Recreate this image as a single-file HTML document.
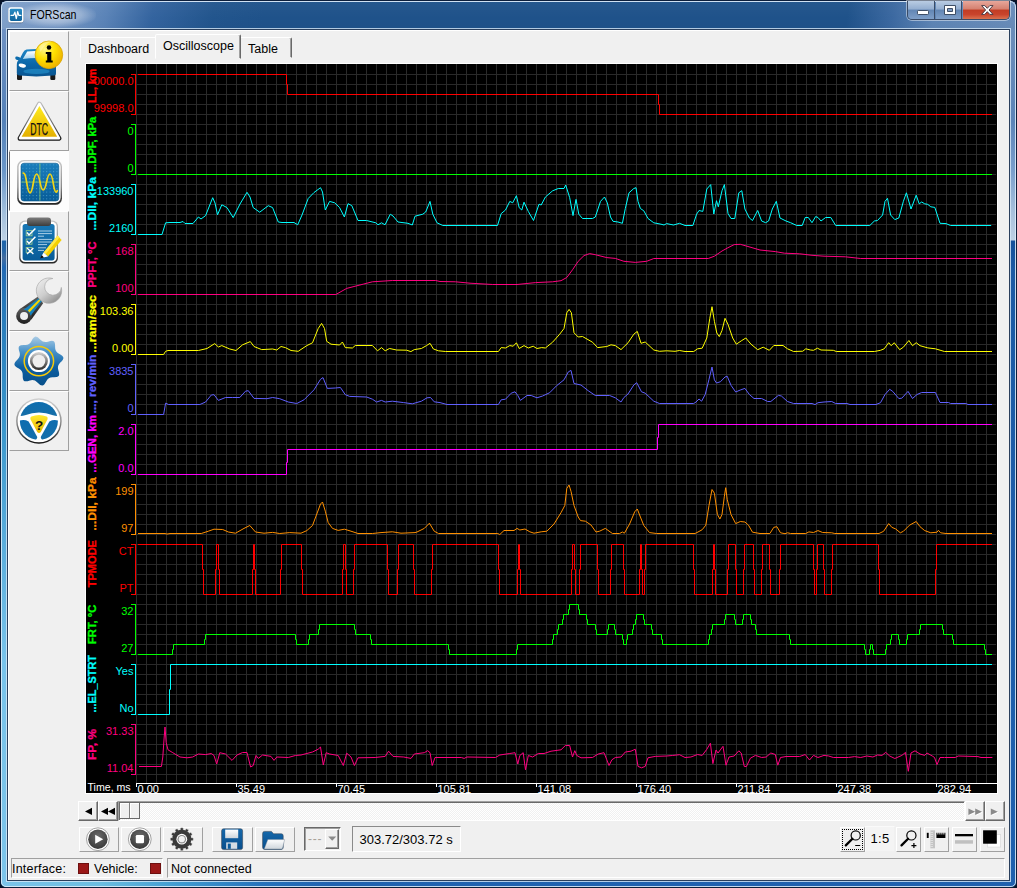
<!DOCTYPE html>
<html lang="en"><head><meta charset="utf-8"><title>FORScan</title>
<style>
html,body{margin:0;padding:0}
body{width:1017px;height:888px;overflow:hidden;background:#071226;font-family:"Liberation Sans","DejaVu Sans",sans-serif;font-size:12.5px;color:#000;position:relative}
div,span{box-sizing:border-box}
.abs{position:absolute}
#win{position:absolute;left:0;top:0;width:1017px;height:888px;border-radius:7px 7px 6px 6px;background:#0d1f3c;overflow:hidden}
#glass{position:absolute;left:1px;top:1px;width:1015px;height:886px;border-radius:6px 6px 5px 5px;
 background:linear-gradient(180deg,#7094c5 0px,#6e91c3 30px,#5582b9 120px,#6996c8 170px,#a0bedc 210px,#bed2e6 239px,#1e64aa 240px,#2a68a8 250px,#466ea0 257px,#2369b4 266px,#2878b9 300px,#3a96cc 420px,#78c3eb 660px,#7cc4ea 886px);}
#glassR{position:absolute;left:1008px;top:1px;width:8px;height:886px;border-radius:0 6px 5px 0;
 background:linear-gradient(180deg,#6a8dba 0px,#698cb9 40px,#5c84b8 120px,#7a9fcc 170px,#a6c0dc 210px,#bed0e4 239px,#14509a 240px,#1c5aa4 270px,#1f60ae 886px);}
#glassB{position:absolute;left:1px;top:880px;width:1015px;height:7px;border-radius:0 0 5px 5px;background:linear-gradient(90deg,#7cc4ea 0px,#6bbde0 100px,#3f9ad0 180px,#2672bb 260px,#1f62b0 330px,#1f60ae 1015px);}
#hl{position:absolute;left:1px;top:1px;width:1015px;height:886px;border-radius:6px 6px 5px 5px;border:1px solid rgba(225,238,250,.85);}
#title{position:absolute;left:2px;top:2px;width:1013px;height:27px;
 background:linear-gradient(100deg,#80a1cb 0px,#7597c5 60px,#5a83b7 105px,#34649f 150px,#22558d 210px,#1f528a 260px,#1f528a 835px,#3c69a1 880px,#5e85b5 920px,#6a8dba 1013px);}
#title:after{content:"";position:absolute;left:0;top:0;right:0;bottom:0;background:linear-gradient(180deg,rgba(255,255,255,.03),rgba(255,255,255,0) 60%,rgba(0,0,0,.02));}
#glow{position:absolute;left:16px;top:3px;width:80px;height:24px;border-radius:12px;background:radial-gradient(ellipse at center,rgba(255,255,255,.55) 0%,rgba(255,255,255,.30) 45%,rgba(255,255,255,0) 75%);}
#ttext{position:absolute;left:29.5px;top:8px;font-size:12.4px;line-height:14px;color:#000;transform:scaleX(.855);transform-origin:0 0}
#clientedge{position:absolute;left:6px;top:28px;width:1005px;height:854px;border:1px solid rgba(215,232,248,.8);}
#clientedge2{position:absolute;left:7px;top:29px;width:1003px;height:852px;border:1px solid #2a3f5c;}
#client{position:absolute;left:8px;top:30px;width:1001px;height:850px;background:#f0f0f0;border-left:1px solid #fff;border-top:1px solid #fff}
/* caption buttons */
#cap{position:absolute;left:907px;top:1px;width:103px;height:19px;border:1px solid #3a4b66;border-top:none;border-radius:0 0 5px 5px;overflow:hidden;box-shadow:0 0 0 1px rgba(255,255,255,.45)}
#cap div{position:absolute;top:0;height:18px}
.cbtn{background:linear-gradient(180deg,#b9cce3 0%,#94aed0 45%,#6286b4 50%,#7f9fc8 100%);}
#cmin{left:0;width:27px;border-right:1px solid #3a4b66}
#cmax{left:28px;width:26px;border-right:1px solid #3a4b66}
#cclose{left:55px;width:47px;background:linear-gradient(180deg,#e7a79b 0%,#d4806f 45%,#c13c24 50%,#c9442c 75%,#d9714f 100%);}
/* sidebar */
.sb{position:absolute;left:9px;width:60px;height:60px;border:1px solid;border-color:#fff #a0a0a0 #a0a0a0 #fff;background:#f0f0f0}
.sb.sel{border-color:#fdfdfd #fdfdfd #fdfdfd #696969;background:#fdfdfd}
/* tabs */
.tab{position:absolute;top:37px;height:21px;border:1px solid;border-color:#fff #696969 transparent #fff;border-radius:2px 2px 0 0;font-size:12.5px;line-height:14px;padding:0;white-space:nowrap;box-shadow:inset -1px 0 0 #a0a0a0}
.tab span{position:absolute;top:4px}
.tab.sel{top:34px;height:25px;background:#f0f0f0}
/* plot */
#plotframe{position:absolute;left:85px;top:63px;width:913px;height:731px;background:#fff}
svg.plot{position:absolute;left:1px;top:1px;display:block}
svg.plot text{font-family:"Liberation Sans","DejaVu Sans",sans-serif}
.tv{font-size:11px}
.tm{font-size:10.6px}
.tl{font-size:11.5px;font-weight:bold}
/* scrollbar */
#sbar{position:absolute;left:118px;top:801px;width:847px;height:20px;background:repeating-conic-gradient(#fff 0% 25%,#f0f0f0 0% 50%) 0 0/2px 2px;border:1px solid;border-color:#a0a0a0 #fff #fff #a0a0a0;box-shadow:inset 1px 1px 0 #696969}
.sbb{position:absolute;top:801px;width:20px;height:20px;background:#f0f0f0;border:1px solid;border-color:#fff #696969 #696969 #fff;box-shadow:inset -1px -1px 0 #a0a0a0}
/* toolbar */
.tb{position:absolute;top:827px;height:25px;background:#f0f0f0;border:1px solid;border-color:#fff #a0a0a0 #a0a0a0 #fff}
.tb svg{position:absolute;left:0;top:0}
/* status */
.st{position:absolute;top:858px;height:20px;border:1px solid;border-color:#a0a0a0 #fff #fff #a0a0a0;font-size:12.5px;line-height:14px}
.st span{position:absolute;top:3px;white-space:nowrap}
.led{position:absolute;top:4px;width:11px;height:11px;background:#9b1818;border:1px solid #6d1010}
</style></head>
<body>
<div id="win">
 <div id="glass"></div><div id="glassR"></div><div id="glassB"></div>
 <div id="title"></div><div id="glow"></div>
 <div id="hl"></div>
 <svg class="abs" style="left:7px;top:6px" width="18" height="18" viewBox="0 0 18 18">
 <defs><linearGradient id="aig" x1="0" y1="0" x2="0" y2="1"><stop offset="0" stop-color="#2a8cc4"/><stop offset="1" stop-color="#0f639c"/></linearGradient></defs>
 <rect x="1.5" y="2" width="15" height="15.2" rx="2.6" fill="#1b2b3f" opacity=".55"/>
 <rect x="1.3" y="1.3" width="15.2" height="15.2" rx="2.6" fill="#fff"/>
 <rect x="2.8" y="2.8" width="12.2" height="12.2" rx="1.4" fill="url(#aig)"/>
 <path d="M4 9.3H6.6L7.9 6.2L9.3 12.6L10.7 5.6L11.8 9.3H14" stroke="#fff" stroke-width="1.25" fill="none" stroke-linejoin="round" stroke-linecap="round"/>
</svg>

 <div id="ttext">FORScan</div>
 <div id="cap"><div id="cmin" class="cbtn"></div><div id="cmax" class="cbtn"></div><div id="cclose"></div><svg class="abs" style="left:0;top:0" width="103" height="20" viewBox="907 1 103 20">
 <rect x="916.5" y="10.5" width="11" height="4" rx=".8" fill="#fff" stroke="#3f4f66" stroke-width="1"/>
 <path d="M943.5 5.5h11v9h-11z" fill="#fff" stroke="#3f4f66" stroke-width="1"/>
 <path d="M946.5 8.5h5v3h-5z" fill="#7f9cc4" stroke="#3f4f66" stroke-width="1"/>
 <path d="M980.6 5.6h3.2l2.5 2.7 2.5-2.7h3.2l-4 4.4 4 4.4h-3.2l-2.5-2.7-2.5 2.7h-3.2l4-4.4z" fill="#fff" stroke="#4a3a44" stroke-width="1" stroke-linejoin="round"/>
</svg>
</div>
 <div id="clientedge"></div><div id="clientedge2"></div>
 <div id="client"></div>

 <!-- sidebar -->
 <div class="sb" style="top:31px"></div><svg class="abs" style="left:8px;top:30px" width="62" height="60" viewBox="8 30 62 60">
 <defs>
  <linearGradient id="carb" x1="0" y1="0" x2="0" y2="1"><stop offset="0" stop-color="#1f86c6"/><stop offset=".55" stop-color="#0b66a8"/><stop offset="1" stop-color="#0a5590"/></linearGradient>
  <radialGradient id="cary" cx=".35" cy=".3" r=".8"><stop offset="0" stop-color="#fff68a"/><stop offset=".45" stop-color="#ffe100"/><stop offset="1" stop-color="#e9a800"/></radialGradient>
  <linearGradient id="carw" x1="0" y1="0" x2="0" y2="1"><stop offset="0" stop-color="#ffffff"/><stop offset="1" stop-color="#a8d4ee"/></linearGradient>
 </defs>
 <rect x="17" y="73" width="5" height="7" rx="1.2" fill="#1a1a1a"/>
 <rect x="50.3" y="73" width="5" height="7" rx="1.2" fill="#1a1a1a"/>
 <path d="M26.5 49.6Q33 48.6 46 49.4Q49 50 50.5 53L53 59Q56 61 56 65V73.2Q56 75.4 53 75.6Q36.4 77.2 19.5 75.6Q16.8 75.4 16.8 73.2V65Q16.8 61 19.5 59.3L23 52.5Q24.3 50 26.5 49.6Z" fill="url(#carb)"/>
 <path d="M15.3 57.4Q15.5 56.4 17 56.6L19.6 57.3Q20.6 58 20 59.4L18.8 60.2Q15 60 15.3 57.4Z" fill="#0d6cad"/>
 <path d="M27.2 51.6Q34 50.7 45 51.5L48.5 58.6Q34 57 22.8 59Z" fill="url(#carw)"/>
 <ellipse cx="22.3" cy="65.6" rx="3.7" ry="1.9" fill="#fff" transform="rotate(12 22.3 65.6)"/>
 <ellipse cx="50.5" cy="65.6" rx="3.7" ry="1.9" fill="#fff" transform="rotate(-12 50.5 65.6)"/>
 <ellipse cx="36.5" cy="71.4" rx="13" ry="2.6" fill="#2a9ad6" opacity=".55"/>
 <circle cx="48.9" cy="54.85" r="13.8" fill="url(#cary)" stroke="#d9a400" stroke-width=".8"/>
 <path d="M39 47Q44 40 52 41.5Q44 44 40.5 52Z" fill="#fff" opacity=".35"/>
 <circle cx="49" cy="47.6" r="2.25" fill="#000"/>
 <path d="M45.8 52.1H51.3V60.5H52.7V62.4H45.8V60.5H47.2V54H45.8Z" fill="#000"/>
</svg>

 <div class="sb" style="top:91px"></div><svg class="abs" style="left:8px;top:90px" width="62" height="60" viewBox="8 90 62 60">
 <defs>
  <linearGradient id="dtcy" x1="0" y1="0" x2="0" y2="1"><stop offset="0" stop-color="#ffec20"/><stop offset="1" stop-color="#e4b000"/></linearGradient>
  <linearGradient id="dtco" gradientUnits="userSpaceOnUse" x1="0" y1="101" x2="0" y2="141"><stop offset="0" stop-color="#c4c4c4"/><stop offset=".6" stop-color="#6a6a6a"/><stop offset="1" stop-color="#111"/></linearGradient>
 </defs>
 <path d="M39.4 104.2L58.8 138.2H20.2Z" fill="url(#dtco)" stroke="url(#dtco)" stroke-width="5.2" stroke-linejoin="round"/>
 <path d="M39.4 104.2L58.8 138.2H20.2Z" fill="#fff" stroke="#fff" stroke-width="2.8" stroke-linejoin="round"/>
 <path d="M39.4 105.9L57.2 136.8H21.6Z" fill="url(#dtcy)"/>
 <text x="39.2" y="135" font-family="'Liberation Sans',sans-serif" font-size="16.5" text-anchor="middle" textLength="18" lengthAdjust="spacingAndGlyphs" fill="#111" stroke="#111" stroke-width=".25">DTC</text>
</svg>

 <div class="sb sel" style="top:151px"></div><svg class="abs" style="left:8px;top:150px" width="62" height="60" viewBox="8 150 62 60">
 <defs>
  <linearGradient id="osco" x1="0" y1="0" x2="0" y2="1"><stop offset="0" stop-color="#c9c9c9"/><stop offset=".6" stop-color="#8a8a8a"/><stop offset="1" stop-color="#1e1e1e"/></linearGradient>
  <linearGradient id="oscb" x1="0" y1="0" x2="0" y2="1"><stop offset="0" stop-color="#1a7dbb"/><stop offset="1" stop-color="#075c98"/></linearGradient>
  <pattern id="oscd" x="22.4" y="164.4" width="3.4" height="3.4" patternUnits="userSpaceOnUse"><rect x="0" y="0" width="1" height="1" fill="#5fb0d8" opacity=".7"/></pattern>
 </defs>
 <rect x="17.2" y="160" width="44.8" height="44.8" rx="6.5" fill="url(#osco)"/>
 <rect x="18.6" y="161.3" width="42" height="41.6" rx="5.4" fill="#fff"/>
 <rect x="21" y="163.2" width="37.8" height="37.8" rx="3" fill="url(#oscb)" stroke="#0c5a8e" stroke-width=".6"/>
 <rect x="22" y="164" width="36" height="36" fill="url(#oscd)"/>
 <path d="M39.9 163.5V200.7M21.3 182.1H58.5" stroke="#8fcf6a" stroke-width="1" opacity=".75"/>
 <path d="M23.2 173.2C27 172.5 26.5 192.8 30 192.8S33 174 36.6 174S39.8 190 43.2 190S46.5 174 50 174S53 192.2 56.3 192.2Q57 192 57.3 190.5" stroke="#f2d416" stroke-width="1.7" fill="none" stroke-linecap="round"/>
</svg>

 <div class="sb" style="top:211px"></div><svg class="abs" style="left:8px;top:210px" width="62" height="60" viewBox="8 210 62 60">
 <defs>
  <linearGradient id="clo" x1="0" y1="0" x2="0" y2="1"><stop offset="0" stop-color="#c4c4c4"/><stop offset=".6" stop-color="#8a8a8a"/><stop offset="1" stop-color="#222"/></linearGradient>
  <linearGradient id="clb" x1="0" y1="0" x2="0" y2="1"><stop offset="0" stop-color="#1878b6"/><stop offset="1" stop-color="#085c98"/></linearGradient>
  <linearGradient id="clc" x1="0" y1="0" x2="0" y2="1"><stop offset="0" stop-color="#7c7c7c"/><stop offset="1" stop-color="#3c3c3c"/></linearGradient>
 </defs>
 <rect x="19.2" y="220.6" width="38.8" height="43" rx="5.5" fill="url(#clo)"/>
 <rect x="20.5" y="221.8" width="36.2" height="40.2" rx="4.6" fill="#fff"/>
 <rect x="22.6" y="224" width="32" height="36.4" rx="2.6" fill="url(#clb)"/>
 <rect x="27" y="217.6" width="24" height="8.4" rx="3" fill="url(#clc)"/>
 <g fill="none" stroke="#9fd08a" stroke-width=".8"><rect x="26.2" y="230.6" width="5.8" height="5.2"/><rect x="26.2" y="239" width="5.8" height="5.2"/><rect x="26.2" y="247.4" width="5.8" height="5.2"/></g>
 <path d="M27 232.6L29 235L35.4 228.4M27 241L29 243.4L35.4 236.8" stroke="#fff" stroke-width="1.5" fill="none"/>
 <path d="M27 248L33.4 254M33.4 248L27 254" stroke="#fff" stroke-width="1.3" fill="none"/>
 <path d="M38 231H52M38 233.6H52M38 236.2H44M38 239.4H52M38 242H52M38 244.6H47M38 247.8H46M38 250.4H44" stroke="#cfe6f4" stroke-width=".8"/>
 <path d="M57.6 235.6L61.6 240L48 256.4L43.6 252.4Z" fill="#f4d000"/>
 <path d="M57.6 235.6L59.4 237.6L45.6 254L43.6 252.4Z" fill="#ffe94a"/>
 <path d="M43.6 252.4L48 256.4L40.6 258Z" fill="#fff"/>
 <path d="M41.7 255.6L43 257.5L40.3 258.2Z" fill="#000"/>
 <path d="M40.3 258.2L41.9 255.2L44 257.4Z" fill="#111"/>
</svg>

 <div class="sb" style="top:271px"></div><svg class="abs" style="left:8px;top:270px" width="62" height="60" viewBox="8 270 62 60">
 <defs>
  <linearGradient id="wrs" x1="0" y1="0" x2=".8" y2="1"><stop offset="0" stop-color="#f2f2f2"/><stop offset=".55" stop-color="#cdcdcd"/><stop offset="1" stop-color="#8a8a8a"/></linearGradient>
  <linearGradient id="wrd" x1="0" y1="0" x2="0" y2="1"><stop offset="0" stop-color="#5e5e5e"/><stop offset="1" stop-color="#1e1e1e"/></linearGradient>
 </defs>
 <path d="M19.2 309.6L37.6 296.8L43.2 303.2L31.4 319.6Z" fill="url(#wrd)"/>
 <circle cx="24.05" cy="316" r="7.9" fill="url(#wrd)"/>
 <path d="M23.6 309.8L38.6 298.2L42 300.9L30.6 315.8Q29 310.4 23.6 309.8Z" fill="#1580bc"/>
 <path d="M27.8 310.4L39.2 299.2L40.6 300.5L29.6 312.2Z" fill="#f6d400"/>
 <circle cx="24.05" cy="315.9" r="4" fill="#f0f0f0"/>
 <path d="M52.8 278.5A12.7 12.7 0 1 0 61.3 287.4A8.35 8.35 0 1 1 52.8 278.5Z" fill="url(#wrs)" stroke="#a2a2a2" stroke-width=".6"/>
</svg>

 <div class="sb" style="top:331px"></div><svg class="abs" style="left:8px;top:330px" width="62" height="60" viewBox="8 330 62 60">
 <defs>
  <linearGradient id="grb" x1="0" y1="0" x2="0" y2="1"><stop offset="0" stop-color="#a9cbe5"/><stop offset=".3" stop-color="#4a93ca"/><stop offset=".62" stop-color="#0d5fa2"/><stop offset="1" stop-color="#07508a"/></linearGradient>
  <linearGradient id="grg" x1="0" y1="0" x2="0" y2="1"><stop offset="0" stop-color="#d6d6d6"/><stop offset=".5" stop-color="#7a7a7a"/><stop offset="1" stop-color="#2a2a2a"/></linearGradient>
 </defs>
 <path d="M24.9 344.9Q29.5 345.1 31.5 341.0Q33.6 336.9 35.5 336.6Q37.3 336.4 40.4 339.7Q43.6 343.1 47.9 341.7Q52.3 340.2 53.8 341.3Q55.3 342.5 55.1 347.1Q54.9 351.7 59.0 353.7Q63.1 355.8 63.4 357.7Q63.6 359.5 60.3 362.6Q56.9 365.8 58.3 370.1Q59.8 374.5 58.7 376.0Q57.5 377.5 52.9 377.3Q48.3 377.1 46.3 381.2Q44.2 385.3 42.3 385.6Q40.5 385.8 37.4 382.5Q34.2 379.1 29.9 380.5Q25.5 382.0 24.0 380.9Q22.5 379.7 22.7 375.1Q22.9 370.5 18.8 368.5Q14.7 366.4 14.4 364.5Q14.2 362.7 17.5 359.6Q20.9 356.4 19.5 352.1Q18.0 347.7 19.1 346.2Q20.3 344.7 24.9 344.9Z" fill="url(#grb)"/>
 <circle cx="38.9" cy="361.1" r="14.7" fill="none" stroke="#f5c90a" stroke-width="1.5"/>
 <circle cx="38.9" cy="361.1" r="11" fill="#fff"/>
 <circle cx="38.9" cy="361.1" r="9" fill="url(#grg)"/>
 <circle cx="38.9" cy="361.1" r="6.4" fill="#eeeeee"/>
</svg>

 <div class="sb" style="top:391px"></div><svg class="abs" style="left:8px;top:390px" width="62" height="60" viewBox="8 390 62 60">
 <defs>
  <linearGradient id="hlo" x1="0" y1="0" x2="0" y2="1"><stop offset="0" stop-color="#d2d2d2"/><stop offset=".55" stop-color="#8c8c8c"/><stop offset="1" stop-color="#111"/></linearGradient>
  <linearGradient id="hlb" x1="0" y1="0" x2="0" y2="1"><stop offset="0" stop-color="#0d6db0"/><stop offset="1" stop-color="#176fa8"/></linearGradient>
  <linearGradient id="hly" x1="0" y1="0" x2="0" y2="1"><stop offset="0" stop-color="#ffe92e"/><stop offset="1" stop-color="#eab800"/></linearGradient>
  <clipPath id="hlc"><circle cx="38.9" cy="421" r="19"/></clipPath>
 </defs>
 <circle cx="38.9" cy="421" r="22.8" fill="url(#hlo)"/>
 <circle cx="38.9" cy="421" r="21.3" fill="#fff"/>
 <g clip-path="url(#hlc)" fill="url(#hlb)">
  <path d="M18 400H60V415.6Q56.5 416.6 53 415.2Q39 410 25 415.2Q21.5 416.6 18 415.6Z"/>
  <path d="M18 421Q24 419 28.6 421.4L37 436.6Q37.6 438.6 35.4 440.2L30 444H18Z"/>
  <path d="M60 421Q54 419 49.4 421.4L41 436.6Q40.4 438.6 42.6 440.2L48 444H60Z"/>
 </g>
 <path d="M31.4 416.4Q39 413.4 46.6 416.4Q48.4 417.4 47.4 419.6L40.8 432Q39 434 37.2 432L30.6 419.6Q29.6 417.4 31.4 416.4Z" fill="url(#hly)"/>
 <text x="39" y="430.2" font-family="'Liberation Sans',sans-serif" font-size="13.5" font-weight="bold" text-anchor="middle" fill="#111">?</text>
</svg>


 <!-- tabs -->
 <div class="tab" style="left:80px;width:78px"><span style="left:7px">Dashboard</span></div>
 <div class="tab" style="left:238px;width:54px"><span style="left:9px">Table</span></div>
 <div class="tab sel" style="left:155px;width:86px"><span style="left:7px">Oscilloscope</span></div>

 <!-- plot -->
 <div id="plotframe">
<svg class="plot" width="911" height="729" viewBox="86 64 911 729">
<rect x="86" y="64" width="911" height="729" fill="#000"/>
<path d="M136.5 64V783M146.5 64V783M156.5 64V783M166.5 64V783M176.5 64V783M186.5 64V783M196.5 64V783M206.5 64V783M216.5 64V783M226.5 64V783M236.5 64V783M246.5 64V783M256.5 64V783M266.5 64V783M276.5 64V783M286.5 64V783M296.5 64V783M306.5 64V783M316.5 64V783M326.5 64V783M336.5 64V783M346.5 64V783M356.5 64V783M366.5 64V783M376.5 64V783M386.5 64V783M396.5 64V783M406.5 64V783M416.5 64V783M426.5 64V783M436.5 64V783M446.5 64V783M456.5 64V783M466.5 64V783M476.5 64V783M486.5 64V783M496.5 64V783M506.5 64V783M516.5 64V783M526.5 64V783M536.5 64V783M546.5 64V783M556.5 64V783M566.5 64V783M576.5 64V783M586.5 64V783M596.5 64V783M606.5 64V783M616.5 64V783M626.5 64V783M636.5 64V783M646.5 64V783M656.5 64V783M666.5 64V783M676.5 64V783M686.5 64V783M696.5 64V783M706.5 64V783M716.5 64V783M726.5 64V783M736.5 64V783M746.5 64V783M756.5 64V783M766.5 64V783M776.5 64V783M786.5 64V783M796.5 64V783M806.5 64V783M816.5 64V783M826.5 64V783M836.5 64V783M846.5 64V783M856.5 64V783M866.5 64V783M876.5 64V783M886.5 64V783M896.5 64V783M906.5 64V783M916.5 64V783M926.5 64V783M936.5 64V783M946.5 64V783M956.5 64V783M966.5 64V783M976.5 64V783M986.5 64V783M136 74.5H996M136 84.5H996M136 94.5H996M136 104.5H996M136 114.5H996M136 124.5H996M136 134.5H996M136 144.5H996M136 154.5H996M136 164.5H996M136 174.5H996M136 184.5H996M136 194.5H996M136 204.5H996M136 214.5H996M136 224.5H996M136 234.5H996M136 244.5H996M136 254.5H996M136 264.5H996M136 274.5H996M136 284.5H996M136 294.5H996M136 304.5H996M136 314.5H996M136 324.5H996M136 334.5H996M136 344.5H996M136 354.5H996M136 364.5H996M136 374.5H996M136 384.5H996M136 394.5H996M136 404.5H996M136 414.5H996M136 424.5H996M136 434.5H996M136 444.5H996M136 454.5H996M136 464.5H996M136 474.5H996M136 484.5H996M136 494.5H996M136 504.5H996M136 514.5H996M136 524.5H996M136 534.5H996M136 544.5H996M136 554.5H996M136 564.5H996M136 574.5H996M136 584.5H996M136 594.5H996M136 604.5H996M136 614.5H996M136 624.5H996M136 634.5H996M136 644.5H996M136 654.5H996M136 664.5H996M136 674.5H996M136 684.5H996M136 694.5H996M136 704.5H996M136 714.5H996M136 724.5H996M136 734.5H996M136 744.5H996M136 754.5H996M136 764.5H996M136 774.5H996" stroke="#2a2a2a" stroke-width="1" fill="none" shape-rendering="crispEdges"/>
<path d="M136 783.5H997" stroke="#fff" stroke-width="1" shape-rendering="crispEdges"/>
<text x="137.5" y="792.6" class="tv" fill="#fff">0.00</text>
<text x="237.5" y="792.6" class="tv" fill="#fff">35.49</text>
<text x="337.5" y="792.6" class="tv" fill="#fff">70.45</text>
<text x="437.5" y="792.6" class="tv" fill="#fff">105.81</text>
<text x="537.5" y="792.6" class="tv" fill="#fff">141.08</text>
<text x="637.5" y="792.6" class="tv" fill="#fff">176.40</text>
<text x="737.5" y="792.6" class="tv" fill="#fff">211.84</text>
<text x="837.5" y="792.6" class="tv" fill="#fff">247.38</text>
<text x="937.5" y="792.6" class="tv" fill="#fff">282.94</text>
<path d="M136.5 783V787M236.5 783V787M336.5 783V787M436.5 783V787M536.5 783V787M636.5 783V787M736.5 783V787M836.5 783V787M936.5 783V787" stroke="#fff" stroke-width="1" shape-rendering="crispEdges"/>
<text x="87.5" y="790.8" class="tm" fill="#fff">Time, ms</text>
<text x="133.5" y="85.4" class="tv" text-anchor="end" fill="#ff0000">00000.0</text>
<text x="133.5" y="112.4" class="tv" text-anchor="end" fill="#ff0000">99998.0</text>
<text x="133.5" y="135.4" class="tv" text-anchor="end" fill="#00ff00">0</text>
<text x="133.5" y="172.4" class="tv" text-anchor="end" fill="#00ff00">0</text>
<text x="133.5" y="195.4" class="tv" text-anchor="end" fill="#00ffff">133960</text>
<text x="133.5" y="232.4" class="tv" text-anchor="end" fill="#00ffff">2160</text>
<text x="133.5" y="255.4" class="tv" text-anchor="end" fill="#ff0080">168</text>
<text x="133.5" y="292.4" class="tv" text-anchor="end" fill="#ff0080">100</text>
<text x="133.5" y="315.4" class="tv" text-anchor="end" fill="#ffff00">103.36</text>
<text x="133.5" y="352.4" class="tv" text-anchor="end" fill="#ffff00">0.00</text>
<text x="133.5" y="375.4" class="tv" text-anchor="end" fill="#6060ff">3835</text>
<text x="133.5" y="412.4" class="tv" text-anchor="end" fill="#6060ff">0</text>
<text x="133.5" y="435.4" class="tv" text-anchor="end" fill="#ff00ff">2.0</text>
<text x="133.5" y="472.4" class="tv" text-anchor="end" fill="#ff00ff">0.0</text>
<text x="133.5" y="495.4" class="tv" text-anchor="end" fill="#ff9000">199</text>
<text x="133.5" y="532.4" class="tv" text-anchor="end" fill="#ff9000">97</text>
<text x="133.5" y="555.4" class="tv" text-anchor="end" fill="#ff0000">CT</text>
<text x="133.5" y="592.4" class="tv" text-anchor="end" fill="#ff0000">PT</text>
<text x="133.5" y="615.4" class="tv" text-anchor="end" fill="#00ff00">32</text>
<text x="133.5" y="652.4" class="tv" text-anchor="end" fill="#00ff00">27</text>
<text x="133.5" y="675.4" class="tv" text-anchor="end" fill="#00ffff">Yes</text>
<text x="133.5" y="712.4" class="tv" text-anchor="end" fill="#00ffff">No</text>
<text x="133.5" y="735.4" class="tv" text-anchor="end" fill="#ff0080">31.33</text>
<text x="133.5" y="772.4" class="tv" text-anchor="end" fill="#ff0080">11.04</text>
<text transform="translate(95.9 103) rotate(-90)" class="tl" textLength="34.3" lengthAdjust="spacingAndGlyphs" fill="#ff0000" stroke="#ff0000" stroke-width=".3">LL, km</text>
<text transform="translate(95.9 172.8) rotate(-90)" class="tl" textLength="56.1" lengthAdjust="spacingAndGlyphs" fill="#00ff00" stroke="#00ff00" stroke-width=".3">...DPF, kPa</text>
<text transform="translate(95.9 230.6) rotate(-90)" class="tl" textLength="53.6" lengthAdjust="spacingAndGlyphs" fill="#00ffff" stroke="#00ffff" stroke-width=".3">...DII, kPa</text>
<text transform="translate(95.9 287.4) rotate(-90)" class="tl" textLength="45.9" lengthAdjust="spacingAndGlyphs" fill="#ff0080" stroke="#ff0080" stroke-width=".3">PPFT, °C</text>
<text transform="translate(95.9 352.7) rotate(-90)" class="tl" textLength="57.7" lengthAdjust="spacingAndGlyphs" fill="#ffff00" stroke="#ffff00" stroke-width=".3">...ram/sec</text>
<text transform="translate(95.9 413.5) rotate(-90)" class="tl" textLength="58.8" lengthAdjust="spacingAndGlyphs" fill="#6060ff" stroke="#6060ff" stroke-width=".3">..., rev/min</text>
<text transform="translate(95.9 472.7) rotate(-90)" class="tl" textLength="57.7" lengthAdjust="spacingAndGlyphs" fill="#ff00ff" stroke="#ff00ff" stroke-width=".3">...GEN, km</text>
<text transform="translate(95.9 530.8) rotate(-90)" class="tl" textLength="53.4" lengthAdjust="spacingAndGlyphs" fill="#ff9000" stroke="#ff9000" stroke-width=".3">...DII, kPa</text>
<text transform="translate(95.9 587.3) rotate(-90)" class="tl" textLength="47.3" lengthAdjust="spacingAndGlyphs" fill="#ff0000" stroke="#ff0000" stroke-width=".3">TPMODE</text>
<text transform="translate(95.9 644) rotate(-90)" class="tl" textLength="39.2" lengthAdjust="spacingAndGlyphs" fill="#00ff00" stroke="#00ff00" stroke-width=".3">FRT, °C</text>
<text transform="translate(95.9 712.5) rotate(-90)" class="tl" textLength="57.5" lengthAdjust="spacingAndGlyphs" fill="#00ffff" stroke="#00ffff" stroke-width=".3">...EL_STRT</text>
<text transform="translate(95.9 760) rotate(-90)" class="tl" textLength="31.1" lengthAdjust="spacingAndGlyphs" fill="#ff0080" stroke="#ff0080" stroke-width=".3">FP, %</text>
<path d="M131 74.5H136M135.5 74V115M131 114.5H136" stroke="#ff0000" stroke-width="1" fill="none" shape-rendering="crispEdges"/>
<path d="M131 124.5H136M135.5 124V175M131 174.5H136" stroke="#00ff00" stroke-width="1" fill="none" shape-rendering="crispEdges"/>
<path d="M131 184.5H136M135.5 184V235M131 234.5H136" stroke="#00ffff" stroke-width="1" fill="none" shape-rendering="crispEdges"/>
<path d="M131 244.5H136M135.5 244V295M131 294.5H136" stroke="#ff0080" stroke-width="1" fill="none" shape-rendering="crispEdges"/>
<path d="M131 304.5H136M135.5 304V355M131 354.5H136" stroke="#ffff00" stroke-width="1" fill="none" shape-rendering="crispEdges"/>
<path d="M131 364.5H136M135.5 364V415M131 414.5H136" stroke="#6060ff" stroke-width="1" fill="none" shape-rendering="crispEdges"/>
<path d="M131 424.5H136M135.5 424V475M131 474.5H136" stroke="#ff00ff" stroke-width="1" fill="none" shape-rendering="crispEdges"/>
<path d="M131 484.5H136M135.5 484V535M131 534.5H136" stroke="#ff9000" stroke-width="1" fill="none" shape-rendering="crispEdges"/>
<path d="M131 544.5H136M135.5 544V595M131 594.5H136" stroke="#ff0000" stroke-width="1" fill="none" shape-rendering="crispEdges"/>
<path d="M131 604.5H136M135.5 604V655M131 654.5H136" stroke="#00ff00" stroke-width="1" fill="none" shape-rendering="crispEdges"/>
<path d="M131 664.5H136M135.5 664V715M131 714.5H136" stroke="#00ffff" stroke-width="1" fill="none" shape-rendering="crispEdges"/>
<path d="M131 724.5H136M135.5 724V775M131 774.5H136" stroke="#ff0080" stroke-width="1" fill="none" shape-rendering="crispEdges"/>
<polyline points="138.0,74.5 286.5,74.5 286.5,84.5 287.5,84.5 287.5,94.5 658.5,94.5 658.5,104.5 659.5,104.5 659.5,114.5 992.0,114.5" stroke="#ff0000" stroke-width="1" fill="none" stroke-linejoin="round"/>
<polyline points="138.0,174.5 992.0,174.5" stroke="#00ff00" stroke-width="1" fill="none" stroke-linejoin="round"/>
<polyline points="138.0,234.5 162.0,234.5 165.6,222.8 170.0,222.5 180.0,222.5 183.0,221.5 185.0,223.5 193.0,223.5 198.4,217.0 201.0,219.0 205.6,215.6 209.0,207.0 212.7,197.7 215.0,203.0 217.5,214.8 221.8,204.8 227.0,207.6 233.2,217.6 240.0,204.0 247.0,192.3 250.0,197.0 253.2,207.6 259.7,212.2 268.3,205.7 272.6,207.6 278.3,222.0 282.0,222.5 294.0,222.5 297.7,224.8 302.0,215.0 308.2,198.5 314.0,192.5 320.5,187.7 322.5,192.0 325.3,210.0 329.6,201.4 334.7,202.8 339.6,207.6 344.4,217.0 348.0,203.7 351.8,205.6 358.0,220.5 366.5,220.5 375.8,222.8 378.0,224.8 381.5,222.8 385.0,224.8 390.3,214.2 393.0,216.0 398.0,222.0 408.0,223.3 412.3,225.0 415.0,216.2 422.8,214.2 425.7,212.0 430.0,201.4 432.8,214.2 437.0,222.8 442.8,225.5 497.5,225.5 501.2,213.6 505.5,210.0 509.8,201.4 512.7,202.8 516.4,195.7 519.2,207.7 521.8,210.0 524.0,202.2 528.3,211.4 533.5,220.5 539.0,204.2 541.2,205.0 545.4,197.0 552.6,190.8 558.3,188.5 564.0,188.5 565.7,185.0 569.7,197.7 573.0,215.6 576.0,199.4 578.8,214.2 582.5,218.5 592.5,218.5 595.3,217.0 600.5,201.4 604.5,197.0 607.3,202.8 610.5,217.0 613.0,221.3 618.0,222.0 622.4,223.3 625.3,208.5 629.0,192.8 633.8,188.5 636.0,187.7 638.0,201.4 640.4,208.5 643.8,210.8 648.0,218.5 653.8,222.8 661.0,224.2 664.0,225.0 666.6,223.6 673.5,225.0 679.5,223.3 685.0,225.5 692.9,225.5 696.6,214.2 699.0,210.5 702.8,211.4 706.8,189.0 710.7,184.6 713.8,214.0 716.5,200.7 718.3,206.8 722.0,190.7 724.4,184.6 728.0,213.5 731.0,218.5 734.8,218.5 738.8,192.8 741.8,190.7 744.9,209.0 749.4,218.0 752.5,220.5 757.7,210.5 761.6,221.0 765.6,222.7 768.6,221.0 772.3,209.0 776.3,201.3 780.0,218.0 786.0,221.0 790.6,222.7 796.7,225.5 802.2,225.5 805.2,217.5 808.3,217.5 812.0,222.7 815.6,216.6 818.0,217.5 821.0,221.0 825.6,217.5 830.8,217.5 835.7,225.5 869.8,225.5 874.4,221.0 877.5,220.5 882.6,215.0 885.0,201.3 887.5,198.3 890.6,215.0 894.8,219.6 898.8,218.0 903.4,201.3 906.4,192.8 911.0,209.0 916.2,195.2 919.2,203.8 921.7,202.0 924.7,203.8 927.8,204.4 930.8,206.8 934.8,207.4 940.0,223.3 946.0,223.6 950.6,225.5 991.2,225.5" stroke="#00ffff" stroke-width="1" fill="none" stroke-linejoin="round"/>
<polyline points="138.0,294.5 335.9,294.5 346.7,288.4 363.8,284.0 372.4,281.8 392.3,280.5 435.7,280.5 440.0,281.5 455.6,281.8 470.0,283.2 492.7,284.5 517.0,284.5 535.5,282.6 552.6,281.8 561.0,280.7 566.8,277.5 572.5,269.8 578.2,261.3 584.0,255.6 589.6,253.6 595.3,254.7 606.8,257.6 615.3,258.4 623.9,261.3 635.3,262.4 646.7,261.3 653.8,258.5 708.3,258.5 714.4,256.2 722.0,251.0 728.0,247.7 734.2,244.6 740.3,244.3 748.0,246.5 760.0,250.0 775.3,251.6 784.5,253.2 799.7,253.8 812.0,255.3 824.0,256.2 845.5,256.8 860.7,258.5 992.0,258.5" stroke="#ff0080" stroke-width="1" fill="none" stroke-linejoin="round"/>
<polyline points="138.0,354.5 163.6,354.5 165.6,351.3 168.0,350.5 198.4,350.5 207.0,348.5 214.7,343.6 218.4,347.0 221.8,345.6 229.8,349.0 236.0,350.5 242.6,344.8 250.3,341.6 254.0,346.5 261.7,349.6 272.6,349.0 276.8,350.0 281.0,346.5 285.4,347.6 291.0,350.5 298.2,351.3 306.8,345.6 312.5,342.8 318.2,328.5 321.6,323.4 324.5,328.5 326.7,341.3 331.0,344.2 339.6,345.0 342.4,342.0 345.3,347.6 352.4,348.0 355.3,345.5 372.4,345.5 377.5,350.8 381.5,347.6 385.2,350.8 389.5,348.5 396.6,350.0 406.6,350.2 410.9,351.6 414.3,349.6 421.4,348.5 426.5,345.6 430.0,343.3 433.4,349.0 438.5,350.8 445.6,351.5 498.4,351.5 501.2,347.6 505.5,348.0 509.8,345.6 513.2,346.2 516.4,342.8 519.2,348.5 524.0,345.6 528.3,348.0 533.2,346.2 536.9,348.5 541.7,347.6 545.4,348.0 552.6,342.2 559.7,334.2 564.0,328.5 566.8,312.8 569.1,309.4 571.4,312.8 574.0,332.8 578.2,337.0 582.5,336.5 592.5,342.2 597.6,347.6 606.8,346.5 611.0,344.8 615.3,345.6 621.0,349.6 628.0,342.8 633.8,334.2 637.3,331.4 641.0,343.3 645.2,342.0 653.8,350.0 659.5,351.3 666.6,350.8 675.0,351.3 679.5,350.5 685.0,351.5 693.7,351.5 697.6,348.8 702.2,348.2 706.8,338.0 709.8,318.3 712.0,306.7 714.4,321.3 716.8,333.0 719.3,336.6 722.0,330.5 725.0,318.3 728.0,324.4 732.7,338.0 736.3,344.2 741.8,340.5 745.8,338.0 751.0,344.2 757.7,349.7 763.2,347.2 769.3,350.3 773.8,345.5 783.0,345.5 787.5,348.8 793.6,351.5 802.8,351.2 805.8,348.8 810.4,350.0 813.5,350.3 817.4,348.2 821.0,350.0 833.3,350.3 836.3,351.5 874.4,351.5 880.5,350.3 884.2,348.8 888.7,342.7 891.2,345.7 894.2,342.7 899.7,349.7 903.4,347.2 908.9,340.5 912.5,345.7 916.2,342.7 920.0,345.7 927.8,347.9 935.4,348.8 944.5,351.5 992.0,351.5" stroke="#ffff00" stroke-width="1" fill="none" stroke-linejoin="round"/>
<polyline points="138.0,414.5 163.6,414.5 165.6,403.2 168.5,404.5 199.9,404.5 205.6,402.0 211.3,395.0 214.0,394.7 218.4,400.4 225.5,397.5 232.7,397.5 239.8,397.5 245.5,391.2 248.3,390.7 254.0,398.4 266.9,398.7 272.6,397.5 279.7,398.7 288.3,402.0 296.8,403.5 304.0,399.8 314.0,389.8 320.5,379.3 323.0,377.6 327.3,388.4 335.3,388.0 340.4,387.5 345.3,394.7 349.6,396.4 366.7,397.0 372.4,399.2 376.6,402.0 381.5,400.4 385.2,402.0 392.3,401.2 403.7,402.6 412.3,403.8 421.4,401.2 427.0,397.8 430.5,397.5 434.2,401.8 440.0,402.6 447.0,404.5 498.4,404.5 501.2,399.8 505.5,399.2 511.2,393.2 515.0,391.8 517.8,395.5 520.4,400.4 527.0,395.5 531.2,395.5 537.0,397.8 542.6,396.0 549.7,392.7 556.8,385.5 564.0,379.8 568.3,371.9 571.0,370.4 574.0,383.5 581.0,385.0 588.2,390.7 595.3,395.5 609.6,395.5 615.3,397.8 621.0,402.0 623.9,397.5 628.0,394.0 633.8,385.0 636.7,382.7 641.5,391.8 645.2,393.2 653.8,401.2 659.5,403.5 693.7,403.5 696.0,402.0 699.0,399.0 701.6,401.2 705.2,394.5 709.0,379.3 712.0,367.0 714.4,379.9 716.5,383.0 720.5,381.7 725.0,377.0 727.2,376.2 731.0,385.3 735.7,392.0 740.3,390.0 744.9,388.4 749.4,394.5 754.0,398.5 761.6,398.5 767.7,401.5 770.8,401.5 778.4,395.4 781.4,396.0 787.5,401.5 793.6,403.5 812.0,403.5 815.0,404.6 818.0,402.7 824.0,402.0 831.7,401.5 835.7,403.5 847.0,403.5 850.0,404.5 876.0,404.5 880.5,402.7 885.0,394.5 889.7,389.3 892.7,391.4 898.8,398.5 901.8,398.2 908.0,391.4 912.5,398.5 917.0,394.5 921.7,392.5 935.4,392.5 940.0,402.5 948.5,402.5 950.6,403.5 965.9,403.5 968.0,404.5 992.0,404.5" stroke="#6060ff" stroke-width="1" fill="none" stroke-linejoin="round"/>
<polyline points="138.0,474.5 286.5,474.5 286.5,462.5 287.5,462.5 287.5,449.5 657.5,449.5 657.5,437.5 658.5,437.5 658.5,424.5 992.0,424.5" stroke="#ff00ff" stroke-width="1" fill="none" stroke-linejoin="round"/>
<polyline points="138.0,533.5 165.0,533.5 167.0,534.0 170.0,533.5 201.3,533.5 208.4,531.2 214.0,529.2 222.7,529.5 228.4,532.0 235.5,533.2 244.0,528.4 249.8,525.5 255.5,532.0 264.0,533.2 272.6,532.4 279.7,533.5 289.7,532.6 301.0,533.2 306.8,530.6 312.5,525.5 316.8,514.0 320.5,504.0 322.5,502.0 325.3,511.2 328.2,522.6 332.5,528.4 338.2,530.4 344.4,529.2 351.0,531.2 358.0,533.5 372.4,533.5 381.0,532.6 392.3,531.8 401.0,533.2 415.0,532.6 417.0,532.0 424.3,528.4 429.4,523.2 434.2,531.2 438.5,533.5 497.8,533.5 499.8,534.5 504.0,530.5 514.0,530.5 517.0,528.4 519.8,530.0 525.0,529.0 529.8,531.8 534.0,533.2 541.2,531.8 546.9,531.2 554.0,524.0 561.0,512.7 564.8,505.5 566.8,488.4 569.0,485.0 571.0,491.3 574.0,505.5 578.2,517.0 580.5,520.6 585.4,521.2 591.0,525.0 596.0,532.0 599.6,531.2 605.3,528.4 612.4,533.5 619.6,533.5 622.4,532.0 624.4,533.2 629.6,524.0 634.7,511.8 637.3,509.0 640.4,517.0 643.8,525.5 649.5,532.6 656.6,533.5 695.0,533.5 698.0,532.0 702.2,529.7 705.8,525.2 709.0,505.4 712.0,489.5 714.4,493.2 717.4,514.5 719.9,519.0 722.0,514.5 724.4,496.2 725.7,487.7 727.2,499.3 731.0,514.5 735.7,523.6 740.3,521.5 744.9,522.0 748.5,525.2 752.5,532.2 760.0,533.5 769.9,533.5 773.8,527.3 776.9,526.7 780.5,532.8 785.0,533.7 787.5,532.8 790.6,533.5 805.8,533.5 808.9,531.9 813.5,532.5 818.0,530.6 822.6,532.5 831.7,532.8 834.8,533.5 879.0,533.5 883.6,531.3 888.7,523.6 891.8,527.3 895.8,529.0 900.3,532.8 903.4,531.3 909.5,525.2 916.2,521.5 920.0,526.7 924.7,530.6 930.8,532.8 937.0,532.2 938.4,530.3 940.6,532.8 946.0,533.5 992.0,533.5" stroke="#ff9000" stroke-width="1" fill="none" stroke-linejoin="round"/>
<polyline points="138.0,544.5 202.5,544.5 202.5,569.5 203.5,569.5 203.5,594.5 215.5,594.5 215.5,569.5 216.5,569.5 216.5,544.5 218.5,544.5 218.5,569.5 219.5,569.5 219.5,594.5 252.5,594.5 252.5,569.5 253.5,569.5 253.5,544.5 254.5,544.5 254.5,569.5 255.5,569.5 255.5,594.5 280.5,594.5 280.5,569.5 281.5,569.5 281.5,544.5 301.5,544.5 301.5,569.5 302.5,569.5 302.5,594.5 342.5,594.5 342.5,569.5 343.5,569.5 343.5,544.5 345.5,544.5 345.5,569.5 346.5,569.5 346.5,594.5 353.5,594.5 353.5,569.5 354.5,569.5 354.5,544.5 387.5,544.5 387.5,569.5 388.5,569.5 388.5,594.5 397.5,594.5 397.5,569.5 398.5,569.5 398.5,544.5 413.5,544.5 413.5,569.5 414.5,569.5 414.5,594.5 431.5,594.5 431.5,569.5 432.5,569.5 432.5,544.5 498.5,544.5 498.5,569.5 499.5,569.5 499.5,594.5 517.5,594.5 517.5,569.5 518.5,569.5 518.5,544.5 519.5,544.5 519.5,569.5 520.5,569.5 520.5,594.5 571.5,594.5 571.5,569.5 572.5,569.5 572.5,544.5 574.5,544.5 574.5,569.5 575.5,569.5 575.5,594.5 579.5,594.5 579.5,569.5 580.5,569.5 580.5,544.5 597.5,544.5 597.5,569.5 598.5,569.5 598.5,594.5 610.5,594.5 610.5,569.5 611.5,569.5 611.5,544.5 623.5,544.5 623.5,569.5 624.5,569.5 624.5,594.5 639.5,594.5 639.5,569.5 640.5,569.5 640.5,544.5 641.5,544.5 641.5,569.5 642.5,569.5 642.5,594.5 644.5,594.5 644.5,569.5 645.5,569.5 645.5,544.5 693.5,544.5 693.5,569.5 694.5,569.5 694.5,594.5 712.5,594.5 712.5,569.5 713.5,569.5 713.5,544.5 714.5,544.5 714.5,569.5 715.5,569.5 715.5,594.5 727.5,594.5 727.5,569.5 728.5,569.5 728.5,544.5 735.5,544.5 735.5,569.5 736.5,569.5 736.5,594.5 743.5,594.5 743.5,569.5 744.5,569.5 744.5,544.5 753.5,544.5 753.5,569.5 754.5,569.5 754.5,594.5 761.5,594.5 761.5,569.5 762.5,569.5 762.5,544.5 769.5,544.5 769.5,569.5 770.5,569.5 770.5,594.5 779.5,594.5 779.5,569.5 780.5,569.5 780.5,544.5 813.5,544.5 813.5,569.5 814.5,569.5 814.5,594.5 816.5,594.5 816.5,569.5 817.5,569.5 817.5,544.5 823.5,544.5 823.5,569.5 824.5,569.5 824.5,594.5 831.5,594.5 831.5,569.5 832.5,569.5 832.5,544.5 878.5,544.5 878.5,569.5 879.5,569.5 879.5,594.5 935.5,594.5 935.5,569.5 936.5,569.5 936.5,544.5 992.0,544.5" stroke="#ff0000" stroke-width="1" fill="none" stroke-linejoin="round"/>
<polyline points="138.0,654.5 172.5,654.5 172.5,649.5 173.5,649.5 173.5,644.5 204.5,644.5 204.5,639.5 205.5,639.5 205.5,634.5 295.5,634.5 295.5,639.5 296.5,639.5 296.5,644.5 308.5,644.5 308.5,639.5 309.5,639.5 309.5,634.5 318.5,634.5 318.5,629.5 319.5,629.5 319.5,624.5 354.5,624.5 354.5,629.5 355.5,629.5 355.5,634.5 370.5,634.5 370.5,639.5 371.5,639.5 371.5,644.5 448.5,644.5 448.5,649.5 449.5,649.5 449.5,654.5 516.5,654.5 516.5,649.5 517.5,649.5 517.5,644.5 552.5,644.5 552.5,639.5 553.5,639.5 553.5,634.5 557.5,634.5 557.5,629.5 558.5,629.5 558.5,624.5 562.5,624.5 562.5,619.5 563.5,619.5 563.5,614.5 568.5,614.5 568.5,609.5 569.5,609.5 569.5,604.5 578.5,604.5 578.5,609.5 579.5,609.5 579.5,614.5 586.5,614.5 586.5,619.5 587.5,619.5 587.5,624.5 595.5,624.5 595.5,629.5 596.5,629.5 596.5,634.5 607.5,634.5 607.5,629.5 608.5,629.5 608.5,624.5 614.5,624.5 614.5,629.5 615.5,629.5 615.5,634.5 622.5,634.5 622.5,639.5 623.5,639.5 623.5,644.5 626.5,644.5 626.5,639.5 627.5,639.5 627.5,634.5 632.5,634.5 632.5,629.5 633.5,629.5 633.5,624.5 635.5,624.5 635.5,619.5 636.5,619.5 636.5,614.5 643.5,614.5 643.5,619.5 644.5,619.5 644.5,624.5 651.5,624.5 651.5,629.5 652.5,629.5 652.5,634.5 661.5,634.5 661.5,639.5 662.5,639.5 662.5,644.5 708.5,644.5 708.5,639.5 709.5,639.5 709.5,634.5 711.5,634.5 711.5,629.5 712.5,629.5 712.5,624.5 724.5,624.5 724.5,619.5 725.5,619.5 725.5,614.5 734.5,614.5 734.5,619.5 735.5,619.5 735.5,624.5 742.5,624.5 742.5,619.5 743.5,619.5 743.5,614.5 750.5,614.5 750.5,619.5 751.5,619.5 751.5,624.5 755.5,624.5 755.5,629.5 756.5,629.5 756.5,634.5 789.5,634.5 789.5,639.5 790.5,639.5 790.5,644.5 864.5,644.5 864.5,649.5 865.5,649.5 865.5,654.5 869.5,654.5 869.5,649.5 870.5,649.5 870.5,644.5 872.5,644.5 872.5,649.5 873.5,649.5 873.5,654.5 885.5,654.5 885.5,649.5 886.5,649.5 886.5,644.5 890.5,644.5 890.5,639.5 891.5,639.5 891.5,634.5 898.5,634.5 898.5,639.5 899.5,639.5 899.5,644.5 906.5,644.5 906.5,639.5 907.5,639.5 907.5,634.5 919.5,634.5 919.5,629.5 920.5,629.5 920.5,624.5 942.5,624.5 942.5,629.5 943.5,629.5 943.5,634.5 952.5,634.5 952.5,639.5 953.5,639.5 953.5,644.5 984.5,644.5 984.5,649.5 985.5,649.5 985.5,654.5 992.0,654.5" stroke="#00ff00" stroke-width="1" fill="none" stroke-linejoin="round"/>
<polyline points="138.0,714.5 169.5,714.5 169.5,689.5 170.5,689.5 170.5,664.5 992.0,664.5" stroke="#00ffff" stroke-width="1" fill="none" stroke-linejoin="round"/>
<polyline points="139.0,766.5 161.4,766.5 162.8,757.0 164.2,737.0 165.0,727.0 166.2,742.7 168.0,749.8 172.8,752.7 180.0,757.0 187.0,757.8 192.7,757.0 198.4,754.0 205.6,754.6 211.3,753.5 214.0,755.5 216.7,764.0 219.8,752.7 225.5,754.0 232.0,760.4 237.0,755.0 242.6,752.5 247.0,752.5 250.6,767.0 253.2,765.5 256.0,755.5 258.3,758.4 262.6,755.0 271.0,756.4 274.0,760.4 276.8,757.0 288.3,757.5 295.4,755.5 301.0,755.0 312.5,752.0 318.2,749.2 320.5,747.0 323.3,765.0 326.2,752.7 329.6,754.0 338.2,755.5 343.3,765.5 346.7,753.2 351.0,757.0 354.4,765.5 358.0,757.8 375.2,757.5 385.2,756.4 388.6,751.2 393.0,756.4 403.7,757.0 411.0,758.4 414.3,754.0 424.3,752.7 427.7,750.7 430.0,752.7 432.2,765.5 435.0,757.5 461.3,757.5 464.2,758.4 467.0,757.0 495.5,757.5 499.8,755.0 509.8,753.5 515.0,752.7 517.8,764.0 519.8,755.5 523.2,752.7 525.5,769.8 528.3,755.5 532.6,757.0 538.3,753.5 544.0,753.5 551.0,751.2 561.0,749.8 565.4,745.5 569.7,745.5 572.5,757.0 574.8,750.7 576.8,755.5 581.0,757.8 592.5,757.5 598.2,754.0 604.0,752.7 606.8,759.8 609.0,765.5 611.9,759.8 615.3,757.5 621.0,757.0 625.3,752.0 631.0,751.2 635.3,749.2 638.0,766.4 641.5,767.8 645.2,766.4 648.0,757.8 655.2,756.4 666.6,756.0 672.3,755.5 679.5,754.7 685.0,757.5 690.9,757.0 697.6,754.5 702.2,755.4 706.8,749.3 710.4,743.2 712.9,763.6 716.0,750.0 718.0,753.0 723.0,746.3 726.0,765.2 729.0,757.0 734.2,756.0 738.8,750.8 741.2,753.0 744.3,766.5 746.4,766.5 750.4,758.2 755.5,755.4 761.6,757.5 766.2,757.0 770.8,753.0 775.3,754.5 777.8,765.2 780.5,757.5 786.0,756.5 799.7,756.5 805.2,754.5 809.5,760.0 813.5,755.4 818.0,757.5 824.0,755.4 828.7,756.0 833.3,757.5 848.5,757.5 854.6,756.6 860.7,757.5 866.8,756.0 872.9,757.0 877.5,755.0 882.0,755.4 885.7,752.4 889.7,756.0 894.8,758.5 901.9,755.4 905.5,752.4 908.3,771.3 911.0,753.0 915.0,750.8 920.0,754.0 924.7,755.4 927.0,753.0 932.3,756.0 934.5,757.5 937.0,764.6 940.0,757.5 944.5,757.5 955.2,757.5 958.2,756.0 978.0,756.6 981.0,757.5 992.4,757.5" stroke="#ff0080" stroke-width="1" fill="none" stroke-linejoin="round"/>
</svg>
 </div>

 <!-- scrollbar -->
 <div id="sbar"></div>
 <div class="sbb" style="left:78px"></div><div class="sbb" style="left:98px"></div>
<div class="sbb" style="left:965px"></div><div class="sbb" style="left:985px"></div>
<div class="abs" style="left:119px;top:802px;width:21px;height:17px;background:#f0f0f0;border:1px solid #696969;box-shadow:inset 1px 1px 0 #fff"></div>
<div class="abs" style="left:129px;top:803px;width:1px;height:15px;background:#808080;box-shadow:1px 0 0 #fff"></div>
<svg class="abs" style="left:78px;top:801px" width="927" height="20" viewBox="78 801 927 20">
 <path d="M85 811.4L92 807.8V815Z M101 811.4L108 807.8V815Z M108 811.4L115 807.8V815Z" fill="#000"/>
 <path d="M969.2 809.2L976 812.5L969.2 815.8Z M976 809.2L982.8 812.5L976 815.8Z M991.6 809.2L998.6 812.5L991.6 815.8Z" fill="#fff"/>
 <path d="M968.4 808.4L975.2 811.7L968.4 815Z M975.2 808.4L982 811.7L975.2 815Z M990.8 808.4L997.8 811.7L990.8 815Z" fill="#8a8a8a"/>
</svg>


 <!-- toolbar -->
 <div class="tb" style="left:79px;width:40px"></div>
<div class="tb" style="left:121px;width:40px"></div>
<div class="tb" style="left:163px;width:40px"></div>
<div class="tb" style="left:212px;width:41px"></div>
<div class="tb" style="left:255px;width:40px"></div>
<div class="abs" style="left:304px;top:827px;width:37px;height:24px;border:1px solid;border-color:#696969 #fff #fff #696969;box-shadow:inset 1px 1px 0 #a0a0a0;background:#f0f0f0"></div>
<div class="abs" style="left:325px;top:829px;width:14px;height:20px;background:#f0f0f0;border:1px solid;border-color:#fff #696969 #696969 #fff;box-shadow:inset -1px -1px 0 #a0a0a0"></div>
<div class="abs" style="left:308px;top:831.5px;font-size:12px;line-height:14px;color:#a8a098;letter-spacing:.7px">---</div>
<div class="abs" style="left:352px;top:826px;width:109px;height:26px;border:1px solid;border-color:#8a8a8a #fff #fff #8a8a8a;background:#f0f0f0"></div>
<div class="abs" style="left:359.5px;top:832px;font-size:13px;line-height:15px;white-space:nowrap">303.72/303.72 s</div>
<div class="tb" style="left:840px;width:25px"></div>
<div class="abs" style="left:842px;top:829px;width:21px;height:21px;border:1px dotted #000"></div>
<div class="abs" style="left:865px;top:826px;width:30px;height:26px;background:#f4f4f4;border:1px solid;border-color:#fafafa #f0f0f0 #f0f0f0 #fafafa"></div>
<div class="abs" style="left:870.5px;top:831px;font-size:13px;line-height:15px;white-space:nowrap;letter-spacing:.3px">1:5</div>
<div class="tb" style="left:896px;width:25px"></div>
<div class="tb" style="left:924px;width:25px"></div>
<div class="tb" style="left:952px;width:25px"></div>
<div class="tb" style="left:980px;width:25px"></div>
<svg class="abs" style="left:78px;top:826px" width="928" height="27" viewBox="78 826 928 27">
 <defs>
  <radialGradient id="pbg" cx=".5" cy=".35" r=".75"><stop offset="0" stop-color="#6a6a6a"/><stop offset="1" stop-color="#333"/></radialGradient>
  <linearGradient id="flb" x1="0" y1="0" x2="0" y2="1"><stop offset="0" stop-color="#1668aa"/><stop offset="1" stop-color="#084e8c"/></linearGradient>
  <linearGradient id="flw" x1="0" y1="0" x2="0" y2="1"><stop offset="0" stop-color="#ffffff"/><stop offset="1" stop-color="#cfd6dc"/></linearGradient>
 </defs>
 <!-- play -->
 <circle cx="97.9" cy="839.2" r="11.4" fill="#fff" stroke="#8c8c8c" stroke-width=".8"/>
 <circle cx="97.9" cy="839.2" r="9.7" fill="url(#pbg)"/>
 <path d="M95.2 834.8L103.2 839.3L95.2 843.8Z" fill="#fff"/>
 <!-- stop -->
 <circle cx="139.8" cy="839.2" r="11.4" fill="#fff" stroke="#8c8c8c" stroke-width=".8"/>
 <circle cx="139.8" cy="839.2" r="9.7" fill="url(#pbg)"/>
 <rect x="135.8" y="835.1" width="8.2" height="8.2" rx="1.2" fill="#fff"/>
 <!-- gear -->
 <g transform="translate(181.8 839.2)">
  <g fill="#3a3a3a" stroke="#e8e8e8" stroke-width=".5">
   <circle r="9.6"/>
   <rect x="-1.5" y="-11.5" width="3" height="3" rx=".9" transform="rotate(0)"/><rect x="-1.5" y="-11.5" width="3" height="3" rx=".9" transform="rotate(30)"/><rect x="-1.5" y="-11.5" width="3" height="3" rx=".9" transform="rotate(60)"/><rect x="-1.5" y="-11.5" width="3" height="3" rx=".9" transform="rotate(90)"/><rect x="-1.5" y="-11.5" width="3" height="3" rx=".9" transform="rotate(120)"/><rect x="-1.5" y="-11.5" width="3" height="3" rx=".9" transform="rotate(150)"/><rect x="-1.5" y="-11.5" width="3" height="3" rx=".9" transform="rotate(180)"/><rect x="-1.5" y="-11.5" width="3" height="3" rx=".9" transform="rotate(210)"/><rect x="-1.5" y="-11.5" width="3" height="3" rx=".9" transform="rotate(240)"/><rect x="-1.5" y="-11.5" width="3" height="3" rx=".9" transform="rotate(270)"/><rect x="-1.5" y="-11.5" width="3" height="3" rx=".9" transform="rotate(300)"/><rect x="-1.5" y="-11.5" width="3" height="3" rx=".9" transform="rotate(330)"/>
  </g>
  <circle r="9.4" fill="#3a3a3a"/>
  <circle r="5.4" fill="#fff"/>
  <circle r="4.3" fill="#8a8a8a"/>
  <circle r="3.1" fill="#f2f2f2"/>
 </g>
 <!-- floppy -->
 <path d="M223.6 828.8H240.6Q242.6 828.8 242.6 830.8V847.6Q242.6 849.6 240.6 849.6H223.6Q221.6 849.6 221.6 847.6V830.8Q221.6 828.8 223.6 828.8Z" fill="url(#flb)" stroke="#3c4a5a" stroke-width=".6"/>
 <rect x="225.2" y="829.6" width="13" height="8.6" fill="url(#flw)"/>
 <rect x="226.2" y="842.4" width="11" height="6.4" fill="#d6dde4"/>
 <rect x="227.8" y="843.6" width="3" height="5.2" fill="#0b5a9a"/>
 <!-- folder -->
 <path d="M262.6 833.4Q262.6 831.4 264.6 831.4H271.4L273.6 833.8H281.4Q283.2 833.8 283.2 835.8V847.6Q283.2 849.4 281.4 849.4H264.6Q262.6 849.4 262.6 847.6Z" fill="url(#flb)" stroke="#3c4a5a" stroke-width=".6"/>
 <path d="M267.8 839.6H284.6L282.6 848.2Q282.4 849 281.4 849H264.2Z" fill="url(#flw)" stroke="#6a7a8a" stroke-width=".4"/>
 <!-- combo arrow -->
 <path d="M328.2 836.6H336.2L332.2 840.8Z" fill="#8a8a8a"/>
 <!-- zoom out -->
 <circle cx="855.7" cy="835.4" r="4.6" fill="none" stroke="#000" stroke-width="1.2"/>
 <path d="M852.4 838.8L845.8 845.4" stroke="#000" stroke-width="2.3" stroke-linecap="round"/>
 <path d="M855.2 845.5H860.2" stroke="#000" stroke-width="1.2"/>
 <!-- zoom in -->
 <circle cx="911.4" cy="835.4" r="4.6" fill="none" stroke="#000" stroke-width="1.2"/>
 <path d="M908.1 838.8L901.5 845.4" stroke="#000" stroke-width="2.3" stroke-linecap="round"/>
 <path d="M911.4 845.6H916.4M913.9 843.1V848.1" stroke="#000" stroke-width="1.2"/>
 <!-- ruler -->
 <rect x="930.4" y="830.3" width="4.6" height="18" fill="#c4c4c4"/>
 <path d="M930.4 832.5H933M930.4 834.5H933M930.4 836.5H933M930.4 838.5H933M930.4 840.5H933M930.4 842.5H933M930.4 844.5H933M930.4 846.5H933" stroke="#e6e6e6" stroke-width=".8"/>
 <rect x="926.8" y="832.8" width="1.9" height="5.2" fill="#000"/>
 <path d="M936.4 838V832.8H937.4V834.6H938.4V832.8H939.4V834.6H940.4V832.8H941.4V834.6H942.4V832.8H943.4V834.6H944.4V832.8H945.4V838Z" fill="#000"/>
 <!-- lines -->
 <rect x="955" y="834" width="18" height="2.3" fill="#000"/>
 <rect x="955" y="840.2" width="18" height="3.5" fill="#c0c0c0"/>
 <!-- square -->
 <rect x="987.4" y="834.5" width="13.2" height="12.6" fill="#fff" stroke="#dcdcdc" stroke-width=".8"/>
 <rect x="983.1" y="830.3" width="13.7" height="13.4" fill="#000"/>
</svg>


 <!-- status bar -->
 <div class="st" style="left:11px;width:152px"><span style="left:0px;letter-spacing:.2px">Interface:</span><div class="led" style="left:66px"></div><span style="left:82px">Vehicle:</span><div class="led" style="left:138px"></div></div>
 <div class="st" style="left:167px;width:838px"><span style="left:3px">Not connected</span></div>
</div>
</body></html>
